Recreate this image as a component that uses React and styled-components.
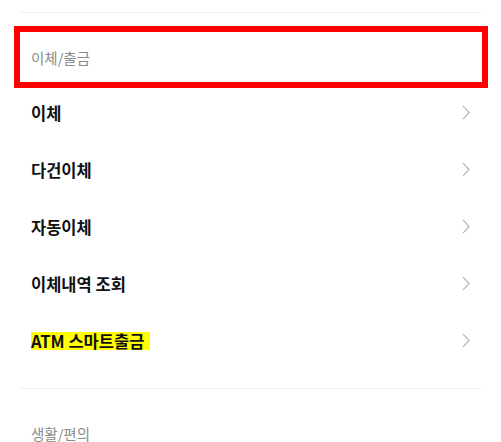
import React from 'react'
import styled, { createGlobalStyle } from 'styled-components'

const GlobalStyle = createGlobalStyle`
  body {
    margin: 0;
    background: #fff;
    font-family: "Noto Sans CJK KR", "Noto Sans", sans-serif;
  }
`;

const menus = [
  { label: '이체' },
  { label: '다건이체' },
  { label: '자동이체' },
  { label: '이체내역 조회' },
  { label: 'ATM 스마트출금', highlight: true },
];

const Chevron = () => (
  <svg width="8" height="15" viewBox="0 0 8 15" fill="none">
    <polyline points="1,1 7,7.5 1,14" stroke="#a6a6a6" strokeWidth="1.1" />
  </svg>
);

const App = () => {
  return (
    <Wrapper>
      <GlobalStyle />
      <Divider />
      <SectionTitle $marked>이체/출금</SectionTitle>
      <List>
        {menus.map((m) => (
          <Row key={m.label}>
            <Label $highlight={m.highlight}>{m.label}</Label>
            <Chevron />
          </Row>
        ))}
      </List>
      <Divider $top={19} />
      <SectionTitle>생활/편의</SectionTitle>
    </Wrapper>
  );
};

const Wrapper = styled.div`
  padding: 12px 20px 0;
  width: 501px;
  box-sizing: border-box;
`;

const Divider = styled.div`
  height: 1px;
  background: #f1f1f1;
  margin-top: ${({ $top }) => ($top || 0)}px;
`;

const SectionTitle = styled.div`
  display: flex;
  align-items: center;
  box-sizing: border-box;
  font-size: 14.5px;
  color: #8a8a8a;
  height: ${({ $marked }) => ($marked ? '62px' : '58px')};
  margin: ${({ $marked }) => ($marked ? '13px -7px -4px -6px' : '15px 0 0')};
  padding-left: 11px;
  border: ${({ $marked }) => ($marked ? '6px solid #ff0000' : 'none')};
`;

const List = styled.div`
  display: flex;
  flex-direction: column;
`;

const Row = styled.div`
  height: 57px;
  display: flex;
  align-items: center;
  justify-content: space-between;
  padding: 0 11px 0 11px;
`;

const Label = styled.span`
  font-size: 16.5px;
  font-weight: 700;
  color: #111;
  display: inline-block;
  height: 18px;
  line-height: 18px;
  padding-right: ${({ $highlight }) => ($highlight ? '6px' : '0')};
  background: ${({ $highlight }) => ($highlight ? '#ffff00' : 'transparent')};
`;

export default App;
